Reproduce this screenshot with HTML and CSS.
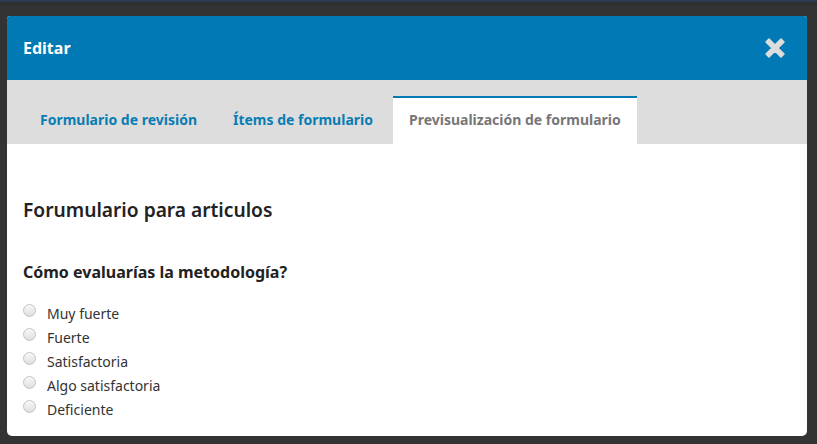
FILE: index.html
```html
<!DOCTYPE html>
<html lang="es">
<head>
<meta charset="utf-8">
<link rel="stylesheet" href="styles.css">
</head>
<body>
<div class="backdrop-strip"></div>
<div class="modal">
  <div class="modal-header">
    <h2 class="modal-title">Editar</h2>
    <button class="close" aria-label="Cerrar">
      <svg width="24" height="24" viewBox="0 0 24 24"><path d="M3 6 L6 3 L12 9 L18 3 L21 6 L15 12 L21 18 L18 21 L12 15 L6 21 L3 18 L9 12 Z" fill="#dddddd" stroke="#dddddd" stroke-width="1.5" stroke-linejoin="round"/></svg>
    </button>
  </div>
  <div class="tabs">
    <a class="tab">Formulario de revisión</a>
    <a class="tab">Ítems de formulario</a>
    <a class="tab active">Previsualización de formulario</a>
  </div>
  <div class="modal-body">
    <h3 class="form-title">Forumulario para articulos</h3>
    <h4 class="question">Cómo evaluarías la metodología?</h4>
    <ul class="options">
      <li><span class="radio"></span>Muy fuerte</li>
      <li><span class="radio"></span>Fuerte</li>
      <li><span class="radio"></span>Satisfactoria</li>
      <li><span class="radio"></span>Algo satisfactoria</li>
      <li><span class="radio"></span>Deficiente</li>
    </ul>
  </div>
</div>
</body>
</html>
```
FILE: styles.css
```css
html, body {
  margin: 0;
  padding: 0;
  background: #333333;
  height: 444px;
  overflow: hidden;
  font-family: "Noto Sans", sans-serif;
}
.backdrop-strip {
  height: 16px;
  box-sizing: border-box;
  border-top: 2px solid #2c3a52;
  background: linear-gradient(#2e2e2e 0, #2e2e2e 4px, #333 4px);
}
.modal {
  margin-left: 7px;
  width: 800px;
  height: 420px;
  background: #fff;
  border-radius: 3px 3px 5px 5px;
  overflow: hidden;
}
.modal-header {
  height: 64px;
  background: #0079b4;
  display: flex;
  align-items: center;
  justify-content: space-between;
  padding: 0 20px 0 16px;
}
.modal-title {
  margin: 0;
  color: #fff;
  font-size: 16px;
  font-weight: 700;
}
.close {
  background: none;
  border: 0;
  padding: 0;
  width: 24px;
  height: 24px;
  display: flex;
}
.tabs {
  height: 64px;
  background: #dddddd;
  display: flex;
  align-items: flex-end;
  gap: 4px;
  padding-left: 17px;
}
.tab {
  height: 48px;
  padding: 0 16px 3px;
  display: flex;
  align-items: center;
  font-size: 14px;
  font-weight: 700;
  color: #0a7cb4;
  box-sizing: border-box;
  border-top: 2px solid transparent;
}
.tab.active {
  background: #fff;
  color: #777777;
  border-top-color: #0079b4;
}
.modal-body {
  padding: 50px 16px 0;
}
.form-title {
  margin: 0;
  font-size: 19.2px;
  font-weight: 600;
  color: #222;
  line-height: 32px;
}
.question {
  margin: 34px 0 0;
  font-size: 16px;
  font-weight: 700;
  color: #222;
  line-height: 24px;
}
.options {
  list-style: none;
  margin: 17px 0 0;
  padding: 0;
}
.options li {
  display: flex;
  align-items: center;
  height: 24px;
  font-size: 14px;
  color: #333;
}
.radio {
  width: 11px;
  height: 11px;
  border-radius: 50%;
  border: 1px solid #c4c4c4;
  background: linear-gradient(#f8f8f8, #dedede);
  margin-right: 11px;
  margin-top: -5px;
}
```
